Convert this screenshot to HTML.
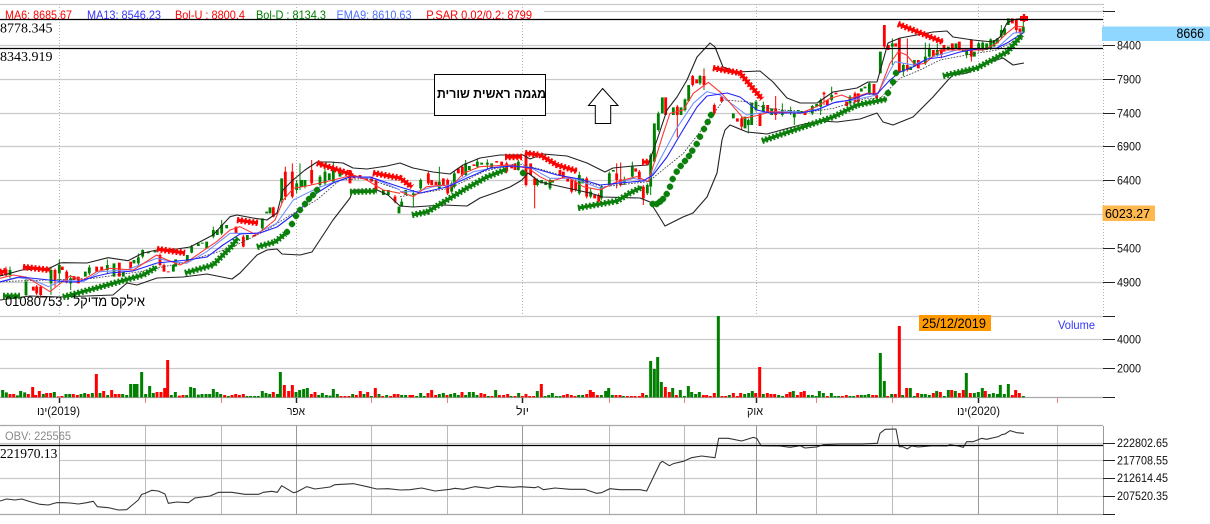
<!DOCTYPE html>
<html><head><meta charset="utf-8"><style>
html,body{margin:0;padding:0;background:#fff;width:1210px;height:524px;overflow:hidden}
svg{display:block;font-family:"Liberation Sans",sans-serif}
.g{fill:none;stroke:#cacaca;stroke-width:1.2}
.l{fill:none;stroke-linejoin:round}
.gb,.rb,.gw,.rw{fill:none}
.gb{stroke:#008000;stroke-width:8.5}.rb{stroke:#f00;stroke-width:8.5}
.gw{stroke:#008000;stroke-width:3}.rw{stroke:#f00;stroke-width:3}
.ma{stroke:#f33;stroke-width:3.2;fill:none;stroke-linejoin:round}
.eb{stroke:#6f8fff;stroke-width:3.2;fill:none;stroke-linejoin:round}
.dt{stroke:#444;stroke-width:2.6;stroke-dasharray:5 4;fill:none}
.v{stroke-width:9;fill:none}
</style></head><body>
<svg width="1210" height="524" viewBox="0 0 1210 524" xmlns="http://www.w3.org/2000/svg">
<defs><g id="m" fill="none" stroke="#0b7f0b"><path stroke-width="2.3" d="M-3.2 0H3.2M0 -3.2V3.2"/><path stroke-width="2" d="M-2.2 -2.2L2.2 2.2M2.2 -2.2L-2.2 2.2"/></g></defs>
<!-- grid -->
<path class="g" d="M0 4.5H1103M544 11.5H1103M0 45.5H1103M0 79.5H1103M0 113.5H1103M0 146.5H1103M0 180.5H1103M0 214.5H1103M0 248.5H1103M0 282.5H1103M0 316.5H1103M0 339.5H1103M0 368.5H1103M0 443.5H1103M0 460.5H1103M0 478.5H1103M0 496.5H1103"/>
<path d="M59.5 4V316M296.5 4V316M522.5 4V316M756.5 4V316M978.5 4V316M1103.5 4V316" stroke="#b5b5b5" stroke-width="1" stroke-dasharray="1 2" fill="none"/>
<path d="M145.5 426V514M221.5 426V514M371.5 426V514M447.5 426V514M609.5 426V514M684.5 426V514M816.5 426V514M892.5 426V514M1057.5 426V514" stroke="#bbb" fill="none"/>
<path d="M59.5 426V514M296.5 426V514M522.5 426V514M756.5 426V514M978.5 426V514M1103.5 426V514" stroke="#999" fill="none"/>
<path d="M0 397.5H1103M0 425.5H1103M0 514.5H1103" stroke="#a8a8a8" stroke-width="1.2" fill="none"/>
<path d="M145.5 398V403M221.5 398V403M371.5 398V403M447.5 398V403M609.5 398V403M684.5 398V403M816.5 398V403M892.5 398V403M1057.5 398V403" stroke="#f08080" fill="none"/>
<path d="M59.5 398V403M296.5 398V403M522.5 398V403M756.5 398V403M978.5 398V403" stroke="#222" stroke-width="1.5" fill="none"/>
<path d="M1103 11.5H1115M1103 45.5H1115M1103 79.5H1115M1103 113.5H1115M1103 146.5H1115M1103 180.5H1115M1103 214.5H1115M1103 248.5H1115M1103 282.5H1115M1103 316.5H1115M1103 339.5H1115M1103 368.5H1115M1103 397.5H1115M1103 443.5H1115M1103 460.5H1115M1103 478.5H1115M1103 496.5H1115M1103 514.5H1115" stroke="#222" fill="none"/>

<!-- candles -->
<g transform="translate(0,170) scale(.33333)">
<path class="gw" d="M30 290V325M78 320V378M153 290V375M178 268V340M212 315V360M268 285V315M322 268V310M415 250V285M428 238V265M575 225V250M640 170V205M665 150V195M787 145V180M845 25V100M890 30V70M900 -20V60M915 30V55M960 15V50M975 -20V45M1000 -25V40"/>
<path class="rw" d="M18 290V320M110 345V375M122 345V385M165 295V350M200 300V340M480 250V290M492 280V305M730 195V232M820 110V142M856 -10V90M877 -20V85M935 -30V45M1128 25V65M1185 75V100"/>
<path class="gb" d="M30 300V315M78 335V375M153 300V340M178 285V310M212 325V340M256 305V320M268 292V310M322 285V300M342 280V320M370 305V320M402 270V280M415 262V280M428 240V260M445 245V250M465 243V247M520 285V305M527 268V290M562 255V275M575 230V248M595 220V228M607 218V221M620 215V235M640 180V200M652 180V195M665 165V190M680 165V175M742 195V210M787 145V175M800 125V130M810 112V130M845 25V90M890 40V60M905 30V50M915 30V50M960 20V45M975 5V40M988 10V30M1000 0V35M1020 5V20M1150 60V75M1165 60V75M1197 110V130"/>
<path class="rb" d="M5 310V318M18 298V316M100 350V362M110 350V370M122 350V375M165 300V330M187 290V300M200 305V335M222 318V330M235 320V340M290 290V305M305 290V300M358 278V320M392 275V295M480 255V285M492 285V305M505 304V307M708 170V190M730 200V230M762 195V200M820 112V140M856 5V80M877 5V80M935 0V40M1050 0V40M1062 15V25M1080 15V25M1100 20V30M1115 20V35M1128 30V60M1185 80V95"/>
</g>
<g transform="translate(400,130) scale(.33333)">
<path class="gw" d="M5 205V230M40 180V230M62 145V180M118 110V175M155 155V190M163 125V175M197 90V140M232 85V112M262 88V120M355 90V122M412 145V170M450 145V180M538 125V195M572 175V205M604 165V210M628 125V170M673 140V165M697 95V145M742 160V195M752 70V195"/>
<path class="rw" d="M85 125V165M143 145V195M187 105V140M320 95V130M378 60V170M404 140V235M515 145V190M527 150V185M560 140V205M596 190V218M650 100V175M662 97V170M718 120V155M730 165V225"/>
<path class="gb" d="M5 215V230M17 180V195M40 190V195M62 150V175M118 155V175M155 160V185M163 130V170M197 100V135M208 108V120M232 95V110M245 98V104M262 98V104M275 100V115M355 95V120M412 150V165M425 150V160M437 155V165M450 150V175M458 150V158M538 135V190M548 145V160M572 185V200M604 170V205M628 130V165M640 120V125M673 148V160M697 110V140M742 165V190M752 75V170M763 -20V95"/>
<path class="rb" d="M85 130V160M95 150V165M108 155V165M130 145V165M143 150V190M175 115V130M187 110V135M222 103V108M290 93V98M305 95V105M320 100V125M335 105V115M345 100V120M378 70V165M392 100V135M404 145V165M480 120V135M490 125V145M503 145V155M515 150V185M527 155V180M560 145V200M584 195V205M596 195V215M650 130V150M662 148V165M707 115V125M718 125V150M730 170V205"/>
</g>
<g transform="translate(400,0) scale(.33333)">
<path class="gw" d="M775 335V395M855 295V335M900 225V255M912 205V270M1045 355V400M1068 300V335M1090 305V340M1147 310V350M1172 320V345M1183 330V375"/>
<path class="rw" d="M832 315V412M878 225V260M912 208V265M943 310V345M1025 350V390M1127 288V360"/>
<path class="gb" d="M763 390V470M775 340V390M787 292V340M820 322V345M843 322V345M855 298V330M866 255V303M900 228V250M1000 340V355M1035 350V385M1045 360V375M1055 308V375M1068 305V330M1090 315V335M1115 325V345M1147 330V345M1172 330V340M1183 340V352M1195 330V340"/>
<path class="rb" d="M797 292V345M832 320V345M878 228V255M890 238V250M912 228V255M943 315V340M965 290V305M1012 355V365M1025 355V380M1080 340V378M1103 315V335M1127 325V345"/>
</g>
<g transform="translate(800,0) scale(.33333)">
<path class="gw" d="M37 315V345M62 295V345M95 260V305M150 285V315M208 245V285M277 115V195M310 190V228M376 128V195M388 130V175M412 130V170M500 145V175M536 125V155M548 125V155M572 115V150M604 75V115M670 60V100"/>
<path class="rw" d="M72 275V315M165 275V310M322 115V215M253 75V145M424 145V175M514 118V185M649 55V100"/>
<path class="gb" d="M5 333V340M37 318V340M50 312V320M62 300V320M95 285V300M150 290V310M184 265V275M195 260V265M208 250V280M241 155V220M277 130V140M310 195V215M332 200V210M343 180V200M376 170V190M388 145V170M412 150V165M445 140V150M468 130V145M490 148V155M500 150V165M523 155V170M536 130V150M548 128V150M560 130V150M572 118V145M582 120V140M592 115V130M604 90V110M614 85V105M625 55V75M670 80V98"/>
<path class="rb" d="M15 338V345M72 278V283M82 300V315M108 278V283M140 305V318M165 280V305M175 280V305M222 252V285M230 285V295M253 75V140M265 135V150M287 130V140M298 115V218M322 195V210M355 180V205M400 150V170M424 150V165M432 135V155M457 130V150M478 125V150M514 118V170M637 55V70M649 60V90M660 85V100"/>
</g>

<!-- MAs -->
<g transform="translate(0,170) scale(.33333)">
<polyline class="dt" points="0,335 280,325 420,305 540,280 640,250 700,230 800,180 880,130 950,90 1020,30 1100,25 1200,60"/>
<polyline class="eb" points="0,335 50,322 100,330 145,350 190,330 250,335 300,305 380,300 470,265 520,275 560,280 620,245 690,190 770,190 830,160 880,90 950,55 1050,20 1120,25 1200,60"/>
<polyline class="ma" points="0,325 40,315 80,322 110,340 150,365 175,345 210,318 250,330 290,305 330,295 400,300 470,255 490,265 540,285 570,270 620,235 650,215 690,180 720,170 770,195 825,150 850,90 880,55 920,48 1000,30 1060,15 1100,30 1150,60 1200,70"/>
</g>
<g transform="translate(400,130) scale(.33333)">
<polyline class="dt" points="0,200 150,175 250,125 350,100 430,120 530,150 610,170 745,155"/>
<polyline class="eb" points="0,185 50,185 100,170 150,165 220,125 320,107 390,112 450,145 520,145 600,175 700,145 745,155"/>
<polyline class="ma" points="0,185 40,200 80,170 130,165 150,175 190,130 240,110 330,105 385,115 420,140 450,155 500,140 550,170 600,180 650,155 710,140 745,155"/>
</g>
<g transform="translate(400,0) scale(.33333)">
<polyline class="dt" points="745,545 850,460 935,350 970,300 1040,305 1100,325 1200,335"/>
<polyline class="eb" points="745,545 830,385 880,310 920,275 960,285 1040,345 1110,335 1200,335"/>
<polyline class="ma" points="745,545 790,400 810,340 850,330 880,280 925,247 965,280 1000,320 1030,355 1080,345 1110,335 1200,340"/>
</g>
<g transform="translate(800,0) scale(.33333)">
<polyline class="dt" points="0,340 100,325 200,295 240,295 300,235 360,210 420,180 500,165 590,150 670,110"/>
<polyline class="eb" points="0,340 60,325 110,305 160,300 230,285 285,185 340,195 400,170 470,150 590,145 640,100 670,95"/>
<polyline class="ma" points="0,340 50,320 90,295 125,285 150,295 200,280 235,280 270,190 295,155 320,165 345,195 375,190 420,150 470,150 550,150 590,130 620,100 645,80 670,80"/>
</g>
<polyline class="l" stroke="#22f" stroke-width="1.1" points="0,282 20,277 40,279 67,282 77,282 97,276 110,273 133,271 157,263 167,262 187,260 207,257 223,245 240,234 260,233 277,227 297,212 317,193 333,183 350,177 370,177 400,187 420,193 447,187 467,178 490,168 513,166 533,168 557,175 580,179 600,185 620,183 643,181 653,175 667,157 683,130 697,107 707,96 727,93 740,97 757,110 770,113 800,113 817,110 833,103 850,100 867,94 877,94 890,80 900,72 913,67 927,59 943,57 960,52 977,49 997,48 1007,43 1023,33"/>

<!-- Bollinger -->
<polyline class="l" stroke="#222" stroke-width="1.1" points="0,276 22,270 50,268 60,263 63,262.7 87,263 108,257.7 128,260.7 143,253 157,250 177,249 190,247 213,235 230,216.7 237,215 253,218 267,220 277,213 283,190 293,180 305,170 317,162 330,162 343,163 353,168 367,169 387,166 400,163 413,168 433,172 450,174 463,165 480,158 500,155 523,155 530,159 543,154 567,156 587,163 605,172 613,168 633,166 648,165 657,140 667,110 677,97 687,80 697,57 710,43 715,47 723,67 737,72 760,71 773,82 787,98 800,103 817,103 833,92 857,88 868,82 877,82 888,43 900,38 933,32 947,31 953,37 973,40 993,42 1000,37 1007,23 1013,20 1024,18"/>
<polyline class="l" stroke="#222" stroke-width="1.1" points="0,300 30,296 60,297 113,295 127,283 137,285 157,278 183,277 207,274 232,279 240,273 257,255 267,250 277,249 282,254 300,255 312,252 333,220 350,198 353,190 377,190 388,195 400,206 413,207 443,205 467,206 480,198 497,192 510,187 522,180 528,173 540,182 567,188 590,193 603,197 640,198 650,202 657,213 665,226 683,217 693,213 707,197 717,173 722,140 725,130 730,125 747,132 767,134 800,125 820,121 837,122 860,119 877,113 883,122 893,125 913,117 933,97 948,80 953,75 967,73 987,63 1003,58 1013,65 1024,63"/>

<!-- Parabolic SAR -->
<g fill="none" stroke="#0b7f0b">
<path stroke-width="3.2" d="M3 296L20 296M63 297L100 287L143 275L157 267M185 273L213 265L230 248L238 238M257 247L275 242L285 234M350 192L377 191M412 215L427 212L447 200L467 188L487 177L507 169M578 208L617 201L630 193L642 187M762 141L800 128L833 117L857 105L887 99M943 76L977 68L1007 52L1022 35"/>
<path stroke-width="6.4" stroke-dasharray="1.9 1.9" d="M3 296L20 296M63 297L100 287L143 275L157 267M185 273L213 265L230 248L238 238M257 247L275 242L285 234M350 192L377 191M412 215L427 212L447 200L467 188L487 177L507 169M578 208L617 201L630 193L642 187M762 141L800 128L833 117L857 105L887 99M943 76L977 68L1007 52L1022 35"/>
</g>
<use href="#m" x="652.7" y="204"/><use href="#m" x="656.7" y="204"/><use href="#m" x="660" y="201.7"/><use href="#m" x="663" y="199"/><use href="#m" x="666.7" y="194"/><use href="#m" x="670" y="186.7"/><use href="#m" x="672.7" y="179"/><use href="#m" x="676.7" y="171.7"/><use href="#m" x="680.7" y="166"/><use href="#m" x="685" y="161"/><use href="#m" x="689" y="156"/><use href="#m" x="692.3" y="150.7"/><use href="#m" x="696.7" y="144"/><use href="#m" x="700" y="136.7"/><use href="#m" x="704" y="129"/><use href="#m" x="707.7" y="122"/><use href="#m" x="711" y="115"/>
<use href="#m" x="888" y="93"/><use href="#m" x="893" y="82"/><use href="#m" x="896" y="73"/>
<use href="#m" x="287" y="232"/><use href="#m" x="292" y="224"/><use href="#m" x="296" y="216"/><use href="#m" x="300" y="210"/><use href="#m" x="305" y="204"/><use href="#m" x="309" y="199"/><use href="#m" x="313" y="195"/><use href="#m" x="317" y="190"/><use href="#m" x="523" y="173"/>
<g fill="none" stroke="#f00">
<path stroke-width="3.2" d="M0 272L7 271M23 267L50 270M157 249L185 253M237 220L258 223M317 163L353 175M373 173L400 178L412 187M505 157L522 157M525 153L540 155L557 165L577 171M642 162L649 162M713 68L740 73L750 85L762 99M898 24L943 42"/>
<path stroke-width="6.4" stroke-dasharray="1.9 1.9" d="M0 272L7 271M23 267L50 270M157 249L185 253M237 220L258 223M317 163L353 175M373 173L400 178L412 187M505 157L522 157M525 153L540 155L557 165L577 171M642 162L649 162M713 68L740 73L750 85L762 99M898 24L943 42"/>
<path stroke-width="5" d="M1020 18.5H1028"/><path stroke-width="2.4" d="M1024 14V22"/>
</g>

<!-- volume -->
<g transform="translate(0,300) scale(.33333)">
<path class="v" stroke="#008000" d="M8 292V270M19 292V277M52 292V286M62 292V273M74 292V277M130 292V282M163 292V276M198 292V282M209 292V282M243 292V282M254 292V279M277 292V279M300 292V279M323 292V285M368 292V282M380 292V285M392 292V252M403 292V252M411 292V252M425 292V216M437 292V282M449 292V258M460 292V279M514 292V285M526 292V276M560 292V285M572 292V261M583 292V264M595 292V284M606 292V282M618 292V282M629 292V282M640 292V267M651 292V276M662 292V282M685 292V288M741 292V288M752 292V288M764 292V288M775 292V288M787 292V273M798 292V279M809 292V282M832 292V282M841 292V216M888 292V276M899 292V270M911 292V267M922 292V264M956 292V285M967 292V279M979 292V285M990 292V287M1000 292V267M1012 292V282M1058 292V282M1092 292V282M1114 292V288M1137 292V282M1160 292V285"/>
<path class="v" stroke="#f00" d="M30 292V282M41 292V282M85 292V282M98 292V261M107 292V285M118 292V273M140 292V279M152 292V279M175 292V289M186 292V288M220 292V282M232 292V285M265 292V282M289 292V222M311 292V273M335 292V270M346 292V282M357 292V282M471 292V276M483 292V276M494 292V264M503 292V180M538 292V287M549 292V285M674 292V285M696 292V285M707 292V282M718 292V285M730 292V282M820 292V276M853 292V255M866 292V273M877 292V255M934 292V282M945 292V276M1023 292V288M1035 292V288M1047 292V288M1069 292V285M1081 292V273M1103 292V276M1126 292V264M1148 292V288M1172 292V288M1183 292V282M1194 292V282"/>
</g>
<g transform="translate(400,300) scale(.33333)">
<path class="v" stroke="#008000" d="M5 292V285M17 292V285M50 292V288M62 292V279M73 292V288M118 292V282M130 292V279M152 292V282M164 292V279M175 292V285M197 292V285M208 292V276M220 292V276M231 292V285M265 292V288M287 292V270M333 292V288M356 292V279M412 292V273M435 292V288M446 292V285M457 292V279M469 292V288M480 292V288M536 292V285M548 292V285M604 292V285M617 292V273M626 292V264M637 292V285M670 292V288M739 292V285M752 292V183M763 292V207M773 292V171M784 292V246M818 292V264M841 292V270M853 292V288M865 292V258M875 292V276M887 292V282M898 292V276M955 292V48M988 292V285M1034 292V282M1046 292V279M1057 292V273M1090 292V282M1136 292V285M1148 292V288M1180 292V273"/>
<path class="v" stroke="#f00" d="M30 292V285M38 292V285M84 292V279M95 292V270M107 292V285M141 292V285M186 292V276M243 292V279M254 292V282M276 292V288M298 292V285M311 292V285M323 292V282M345 292V288M367 292V288M378 292V282M389 292V288M401 292V288M424 292V252M491 292V285M502 292V282M514 292V285M525 292V288M560 292V282M571 292V270M580 292V276M592 292V285M648 292V285M660 292V285M682 292V288M694 292V288M705 292V288M718 292V288M728 292V279M796 292V261M808 292V276M829 292V285M910 292V285M920 292V285M931 292V288M943 292V279M966 292V288M977 292V288M1000 292V279M1012 292V288M1022 292V279M1067 292V279M1079 292V201M1102 292V279M1113 292V282M1124 292V282M1160 292V282M1170 292V276M1192 292V285"/>
</g>
<g transform="translate(800,300) scale(.33333)">
<path class="v" stroke="#008000" d="M25 292V285M37 292V285M48 292V288M58 292V273M70 292V279M94 292V279M105 292V288M116 292V288M150 292V288M161 292V288M184 292V285M195 292V285M206 292V282M241 292V159M253 292V243M275 292V282M308 292V285M331 292V264M343 292V288M365 292V282M376 292V282M388 292V285M410 292V273M433 292V288M445 292V270M466 292V273M499 292V219M523 292V279M535 292V276M547 292V264M568 292V282M580 292V279M592 292V282M601 292V255M613 292V282M625 292V252M670 292V288"/>
<path class="v" stroke="#f00" d="M3 292V276M13 292V273M82 292V288M127 292V288M139 292V285M173 292V285M218 292V285M229 292V285M263 292V288M286 292V282M298 292V78M320 292V264M353 292V279M400 292V279M421 292V276M455 292V270M478 292V279M490 292V270M511 292V279M556 292V273M637 292V285M647 292V270M658 292V279"/>
</g>

<!-- OBV -->
<g class="l" stroke="#333" stroke-width="3.2">
<polyline transform="translate(0,300) scale(.33333)" fill="none" points="0,603 20,597 45,600 65,597 90,605 120,613 145,615 170,608 190,608 210,609 235,612 260,608 280,604 292,620 325,623 355,630 380,629 415,600 425,583 435,580 455,571 475,573 495,582 505,610 530,606 565,608 585,594 630,588 655,577 695,577 735,583 775,583 790,577 815,574 832,577 845,557 880,578 890,576 920,560 945,567 990,561 1005,554 1060,551 1110,562 1130,567 1165,566 1200,570"/>
<polyline transform="translate(400,300) scale(.33333)" fill="none" points="0,570 30,569 65,564 105,573 150,568 165,565 190,568 225,560 265,565 290,559 340,562 360,560 405,563 415,560 430,569 465,564 510,568 555,568 590,580 605,578 630,566 660,569 720,569 740,573 780,490 787,484 808,497 820,491 850,484 875,473 905,468 945,473 956,415 985,415 1025,423 1060,412 1070,415 1083,437 1140,438 1170,442 1200,437"/>
<polyline transform="translate(800,300) scale(.33333)" fill="none" points="0,437 15,444 50,441 70,434 120,432 185,432 232,430 240,400 255,388 288,387 298,440 308,440 322,447 335,438 355,441 400,437 440,438 450,434 475,438 490,442 500,425 520,425 545,415 560,418 595,410 605,404 615,402 630,392 650,398 672,400"/>
</g>

<!-- trend lines -->
<path d="M0 19.5H1103M0 48.5H1103M0 445.5H1103" stroke="#000" stroke-width="1.2" fill="none"/>

<!-- annotations -->
<rect x="434.5" y="74.5" width="111" height="41" fill="#fff" stroke="#000"/>
<text x="491.5" y="98" font-size="13" font-weight="bold" text-anchor="middle" fill="#000" direction="rtl" textLength="109" lengthAdjust="spacingAndGlyphs">מגמה ראשית שורית</text>
<polygon points="602.6,88.5 618,105.5 610.7,105.5 610.7,123.5 595.3,123.5 595.3,105.5 588.5,105.5" fill="#fff" stroke="#000" stroke-width="1"/>

<!-- legend -->
<g font-size="12" xml:space="preserve" style="white-space:pre">
<text x="5" y="19" fill="#f00" textLength="67" lengthAdjust="spacingAndGlyphs">MA6:  8685.67</text>
<text x="87" y="19" fill="#33f" textLength="74" lengthAdjust="spacingAndGlyphs">MA13:  8546.23</text>
<text x="175" y="19" fill="#f00" textLength="70" lengthAdjust="spacingAndGlyphs">Bol-U : 8800.4</text>
<text x="256" y="19" fill="#008000" textLength="70" lengthAdjust="spacingAndGlyphs">Bol-D : 8134.3</text>
<text x="336.5" y="19" fill="#4d70ff" textLength="75" lengthAdjust="spacingAndGlyphs">EMA9:  8610.63</text>
<text x="426.3" y="19" fill="#f00" textLength="105.7" lengthAdjust="spacingAndGlyphs">P.SAR 0.02/0.2:  8799</text>
</g>
<g font-family="Liberation Serif,serif" font-size="14" fill="#000">
<text x="0" y="32.5">8778.345</text>
<text x="0" y="61">8343.919</text>
</g>
<text x="5" y="306" font-size="14" fill="#000" textLength="140" lengthAdjust="spacingAndGlyphs">01080753 : אילקס מדיקל</text>

<!-- right side -->
<rect x="1102" y="26.5" width="108" height="14.5" fill="#8fd7ff"/>
<text x="1176.5" y="38" font-size="14" fill="#000" textLength="27.5" lengthAdjust="spacingAndGlyphs">8666</text>
<rect x="1102.5" y="205.5" width="52.5" height="15.5" fill="#ffb84d"/>
<text x="1105" y="218" font-size="12.5" fill="#000" textLength="45" lengthAdjust="spacingAndGlyphs">6023.27</text>
<g font-size="12" fill="#111" lengthAdjust="spacingAndGlyphs">
<text x="1117" y="49.5" textLength="24" lengthAdjust="spacingAndGlyphs">8400</text>
<text x="1117" y="83.5" textLength="24" lengthAdjust="spacingAndGlyphs">7900</text>
<text x="1117" y="117.5" textLength="24" lengthAdjust="spacingAndGlyphs">7400</text>
<text x="1117" y="150.5" textLength="24" lengthAdjust="spacingAndGlyphs">6900</text>
<text x="1117" y="184.5" textLength="24" lengthAdjust="spacingAndGlyphs">6400</text>
<text x="1117" y="252.5" textLength="24" lengthAdjust="spacingAndGlyphs">5400</text>
<text x="1117" y="286.5" textLength="24" lengthAdjust="spacingAndGlyphs">4900</text>
<text x="1117" y="343.5" textLength="24" lengthAdjust="spacingAndGlyphs">4000</text>
<text x="1117" y="372.5" textLength="24" lengthAdjust="spacingAndGlyphs">2000</text>
<text x="1117" y="447" textLength="51" lengthAdjust="spacingAndGlyphs">222802.65</text>
<text x="1117" y="464.5" textLength="51" lengthAdjust="spacingAndGlyphs">217708.55</text>
<text x="1117" y="482" textLength="51" lengthAdjust="spacingAndGlyphs">212614.45</text>
<text x="1117" y="500" textLength="51" lengthAdjust="spacingAndGlyphs">207520.35</text>
</g>
<rect x="919" y="315" width="72" height="16" fill="#ff9900"/>
<text x="922" y="328" font-size="13.5" fill="#000" textLength="64" lengthAdjust="spacingAndGlyphs">25/12/2019</text>
<text x="1058" y="329" font-size="12" fill="#33f" textLength="37" lengthAdjust="spacingAndGlyphs">Volume</text>

<!-- dates -->
<g font-size="12" fill="#111">
<text x="37" y="415" textLength="43" lengthAdjust="spacingAndGlyphs">ינו&#8206;(2019)</text>
<text x="287" y="415" textLength="18" lengthAdjust="spacingAndGlyphs">אפר</text>
<text x="516" y="415" textLength="13" lengthAdjust="spacingAndGlyphs">יול</text>
<text x="747" y="415" textLength="16" lengthAdjust="spacingAndGlyphs">אוק</text>
<text x="957" y="415" textLength="43" lengthAdjust="spacingAndGlyphs">ינו&#8206;(2020)</text>
</g>
<text x="5" y="440" font-size="11.5" fill="#8a8a8a" textLength="66" lengthAdjust="spacingAndGlyphs">OBV: 225565</text>
<rect x="0" y="447" width="59" height="14" fill="#fff"/>
<text x="0" y="458" font-family="Liberation Serif,serif" font-size="13.5" fill="#000">221970.13</text>
</svg>
</body></html>
